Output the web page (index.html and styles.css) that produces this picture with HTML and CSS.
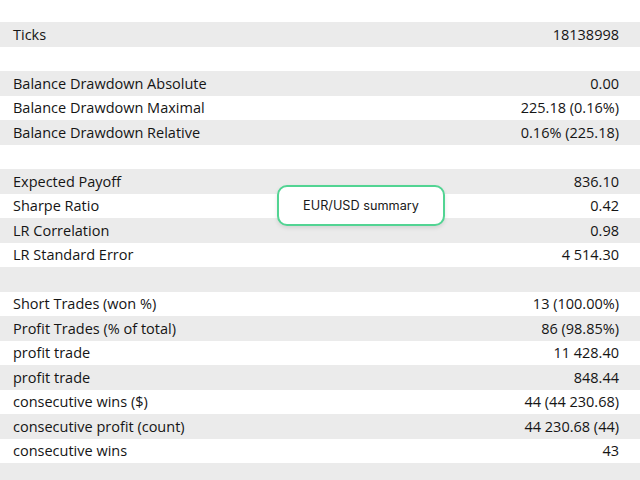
FILE: index.html
```html
<!DOCTYPE html>
<html>
<head>
<meta charset="utf-8">
<link rel="stylesheet" href="styles.css">
</head>
<body>
<div class="report">
  <div class="row top"></div>
  <div class="row"><span>Ticks</span><span>18138998</span></div>
  <div class="row"></div>
  <div class="row"><span>Balance Drawdown Absolute</span><span>0.00</span></div>
  <div class="row"><span>Balance Drawdown Maximal</span><span>225.18 (0.16%)</span></div>
  <div class="row"><span>Balance Drawdown Relative</span><span>0.16% (225.18)</span></div>
  <div class="row"></div>
  <div class="row"><span>Expected Payoff</span><span>836.10</span></div>
  <div class="row"><span>Sharpe Ratio</span><span>0.42</span></div>
  <div class="row"><span>LR Correlation</span><span>0.98</span></div>
  <div class="row"><span>LR Standard Error</span><span>4 514.30</span></div>
  <div class="row"></div>
  <div class="row"><span>Short Trades (won %)</span><span>13 (100.00%)</span></div>
  <div class="row"><span>Profit Trades (% of total)</span><span>86 (98.85%)</span></div>
  <div class="row"><span>profit trade</span><span>11 428.40</span></div>
  <div class="row"><span>profit trade</span><span>848.44</span></div>
  <div class="row"><span>consecutive wins ($)</span><span>44 (44 230.68)</span></div>
  <div class="row"><span>consecutive profit (count)</span><span>44 230.68 (44)</span></div>
  <div class="row"><span>consecutive wins</span><span>43</span></div>
  <div class="row"></div>
</div>
<div class="tip">EUR/USD summary</div>
</body>
</html>
```

FILE: styles.css
```css
html, body {
  margin: 0;
  padding: 0;
  background: #ffffff;
  width: 640px;
  height: 480px;
  overflow: hidden;
}
.report {
  display: flex;
  flex-direction: column;
  font-family: "Open Sans", "Noto Sans", sans-serif;
  font-size: 14.5px;
  font-weight: 500;
  color: #151515;
}
.row {
  height: 24.5px;
  flex: none;
  display: flex;
  justify-content: space-between;
  align-items: center;
  padding: 0 21px 0 13px;
}
.row.top {
  height: 22px;
}
.row:nth-child(even) {
  background: #ebebeb;
}
.tip {
  position: absolute;
  left: 277px;
  top: 185px;
  width: 164px;
  height: 37px;
  border: 2px solid #52d493;
  border-radius: 10px;
  background: #ffffff;
  box-shadow: 0 2px 4px rgba(0,0,0,0.1);
  display: flex;
  align-items: center;
  justify-content: center;
  font-family: "Inter", sans-serif;
  font-size: 12.7px;
  color: #1a1a1a;
}
```
